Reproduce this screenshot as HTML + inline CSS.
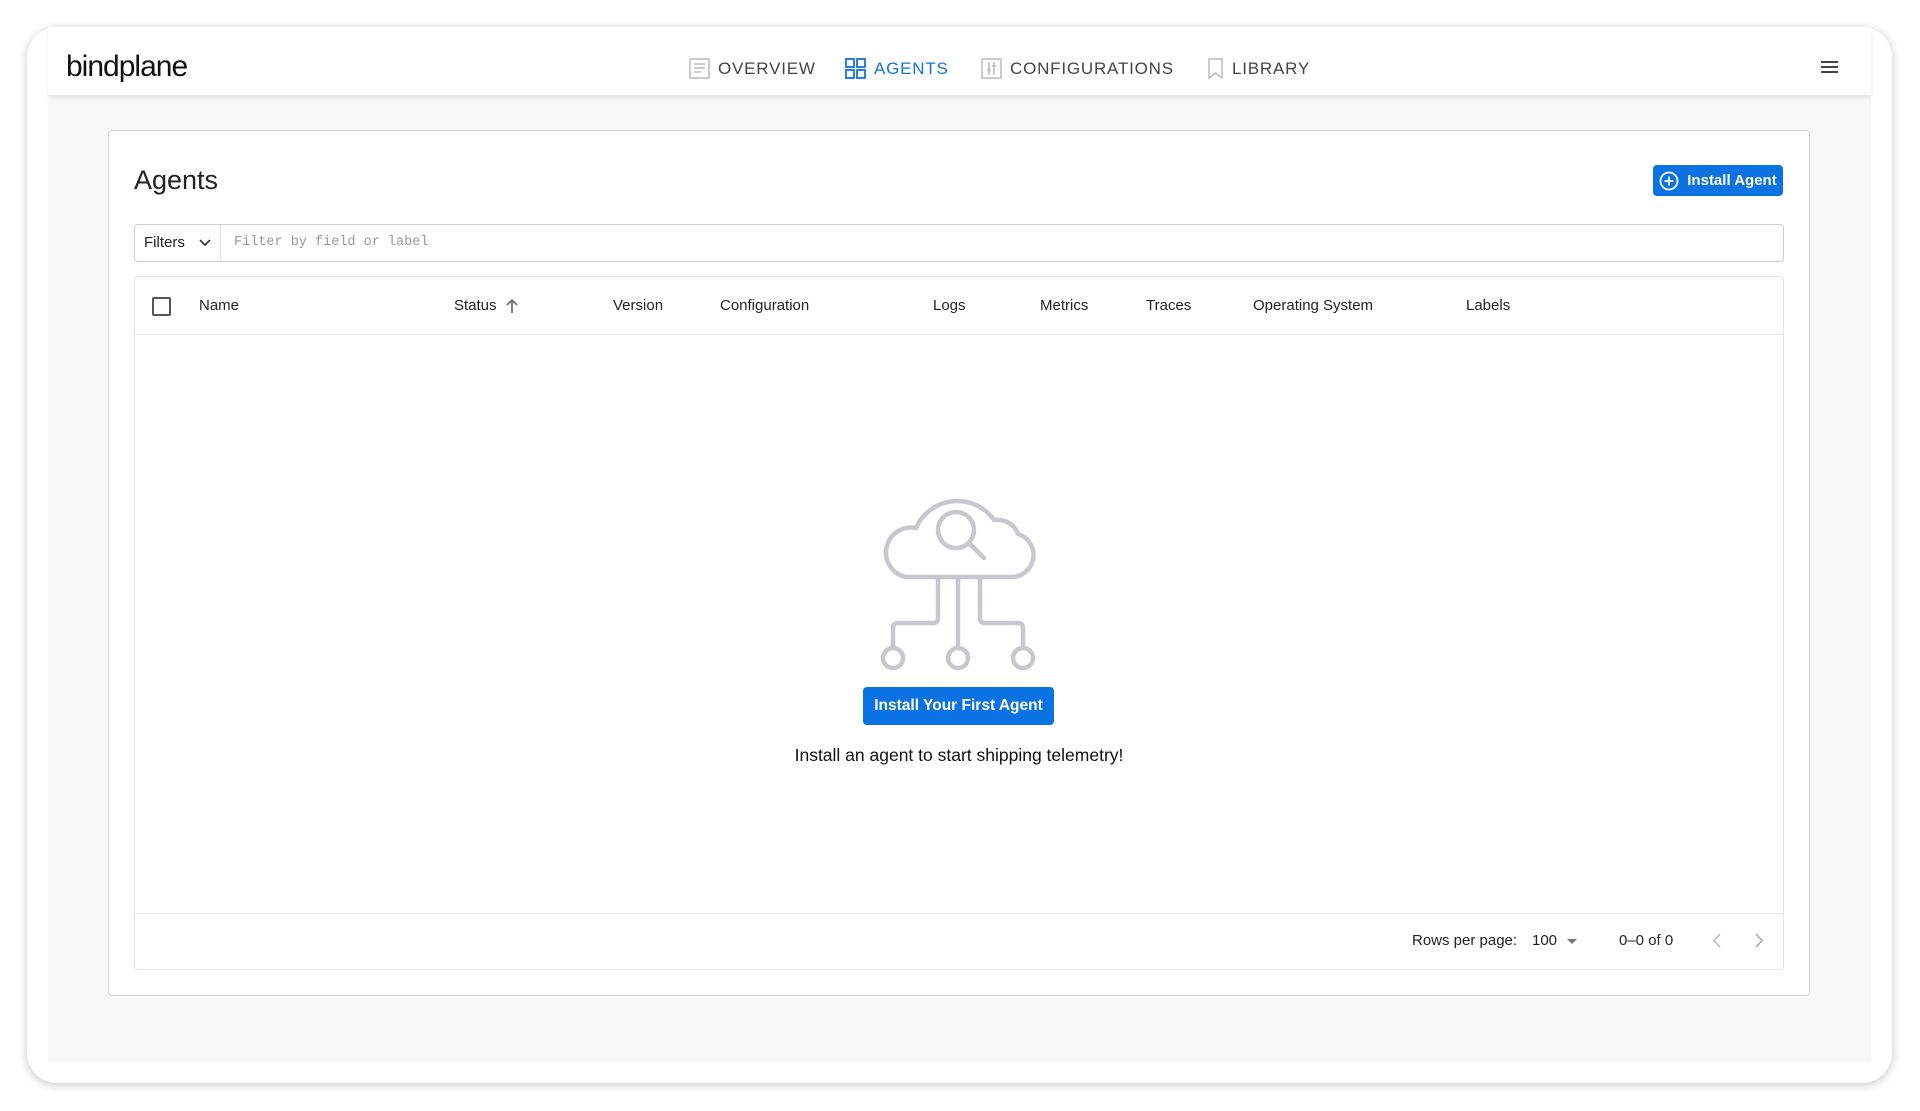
<!DOCTYPE html>
<html><head><meta charset="utf-8"><style>
*{box-sizing:border-box;margin:0;padding:0}
body{width:1920px;height:1111px;background:#fff;font-family:"Liberation Sans",sans-serif;position:relative;overflow:hidden;color:#222}
.card{position:absolute;left:27px;top:27px;width:1865px;height:1056px;background:#fff;border-radius:30px;box-shadow:0 2px 10px rgba(0,0,0,.22)}
.hdr{position:absolute;left:48px;top:27px;width:1823px;height:68px;background:#fff;box-shadow:0 3px 4px rgba(0,0,0,.08);z-index:2}
.bg{position:absolute;left:48px;top:95px;width:1823px;height:967px;background:#f8f8f8}
.logo{position:absolute;left:66px;top:50px;font-size:30px;letter-spacing:-1px;color:#111}
.nav{position:absolute;top:58px;font-size:17px;letter-spacing:.8px;color:#444;display:flex;align-items:center}
.nav svg{margin-right:8px}
.panel{position:absolute;left:108px;top:130px;width:1702px;height:866px;background:#fff;border:1px solid #d6d6d9;border-radius:4px}
.abs{position:absolute}
.btn{background:#0a72e3;color:#fff;border-radius:4px;font-weight:600;display:flex;align-items:center;justify-content:center}
.col{position:absolute;top:297px;font-size:15px;color:#222}
</style></head><body>
<div class="card"></div>
<div class="bg"></div>
<div class="hdr"></div>
<div class="logo" style="z-index:3">bindplane</div>
<div class="nav" style="left:689px;z-index:3"><svg width="21" height="21" viewBox="0 0 21 21" fill="none" stroke="#bbb" stroke-width="1.5"><rect x="1" y="1" width="19" height="19"/><path d="M5 6h11M5 10h11M5 14h7"/></svg>OVERVIEW</div>
<div class="nav" style="left:845px;z-index:3;color:#1373d6"><svg width="21" height="21" viewBox="0 0 21 21" fill="none" stroke="#1373d6" stroke-width="1.8"><rect x="1" y="1" width="8" height="8"/><rect x="12" y="1" width="8" height="8"/><rect x="1" y="12" width="8" height="8"/><rect x="12" y="12" width="8" height="8"/></svg>AGENTS</div>
<div class="nav" style="left:981px;z-index:3"><svg width="21" height="21" viewBox="0 0 21 21" fill="none" stroke="#bbb" stroke-width="1.5"><rect x="1" y="1" width="19" height="19"/><path d="M8 4v13M13 4v13M6 12h4M11 8h4"/></svg>CONFIGURATIONS</div>
<div class="nav" style="left:1207px;z-index:3"><svg width="17" height="21" viewBox="0 0 17 21" fill="none" stroke="#bbb" stroke-width="1.5"><path d="M2 1h13v19l-6.5-5L2 20z"/></svg>LIBRARY</div>
<svg class="abs" style="left:1821px;top:60px;z-index:3" width="17" height="14" viewBox="0 0 17 14" stroke="#444" stroke-width="2"><path d="M0 2h17M0 7h17M0 12h17"/></svg>

<div class="panel"></div>
<div class="abs" style="left:134px;top:165px;font-size:27px;color:#222">Agents</div>
<div class="abs btn" style="left:1653px;top:165px;width:130px;height:31px;font-size:15px"><svg width="20" height="20" viewBox="0 0 20 20" fill="none" stroke="#fff" stroke-width="1.8" style="margin-right:8px"><circle cx="10" cy="10" r="8.5"/><path d="M10 5.5v9M5.5 10h9"/></svg>Install Agent</div>

<div class="abs" style="left:134px;top:224px;width:1650px;height:38px;border:1px solid #cfcfd3;border-radius:4px"></div>
<div class="abs" style="left:220px;top:225px;width:1px;height:36px;background:#ddd"></div>
<div class="abs" style="left:144px;top:234px;font-size:15px">Filters</div>
<svg class="abs" style="left:199px;top:239px" width="12" height="8" viewBox="0 0 12 8" fill="none" stroke="#333" stroke-width="1.6"><path d="M1 1l5 5 5-5"/></svg>
<div class="abs" style="left:234px;top:235px;font-size:13.5px;font-family:'Liberation Mono',monospace;color:#999">Filter by field or label</div>

<div class="abs" style="left:134px;top:276px;width:1650px;height:694px;border:1px solid #e3e3e6;border-radius:4px"></div>
<div class="abs" style="left:135px;top:334px;width:1648px;height:1px;background:#e3e3e6"></div>
<div class="abs" style="left:135px;top:913px;width:1648px;height:1px;background:#e3e3e6"></div>
<div class="abs" style="left:152px;top:297px;width:19px;height:19px;border:2px solid #555;border-radius:2px"></div>
<div class="col" style="left:199px">Name</div>
<div class="col" style="left:454px">Status</div>
<svg class="abs" style="left:506px;top:298px" width="12" height="16" viewBox="0 0 12 16" fill="none" stroke="#666" stroke-width="1.6"><path d="M6 15V2M1 7l5-5 5 5"/></svg>
<div class="col" style="left:613px">Version</div>
<div class="col" style="left:720px">Configuration</div>
<div class="col" style="left:933px">Logs</div>
<div class="col" style="left:1040px">Metrics</div>
<div class="col" style="left:1146px">Traces</div>
<div class="col" style="left:1253px">Operating System</div>
<div class="col" style="left:1466px">Labels</div>

<svg class="abs" style="left:870px;top:470px" width="180" height="210" viewBox="0 0 180 210" fill="none" stroke="#c6c8cd" stroke-width="4.5" stroke-linecap="round" stroke-linejoin="round">
<path d="M36 107H142A22 22 0 0 0 148 64A22 22 0 0 0 124 50A45 45 0 0 0 46 58A25 25 0 0 0 36 107Z"/>
<circle cx="86" cy="60" r="18"/><path d="M99 73L114 88"/>
<path d="M88 107V178"/><circle cx="88" cy="188" r="10"/>
<path d="M68 107V148Q68 153 63 153H28Q23 153 23 158V178"/><circle cx="23" cy="188" r="10"/>
<path d="M110 107V148Q110 153 115 153H148Q153 153 153 158V178"/><circle cx="153" cy="188" r="10"/>
</svg>
<div class="abs btn" style="left:863px;top:687px;width:191px;height:38px;font-size:15.5px">Install Your First Agent</div>
<div class="abs" style="left:759px;top:745px;width:400px;text-align:center;font-size:17.5px;color:#111">Install an agent to start shipping telemetry!</div>

<div class="abs" style="left:1412px;top:932px;font-size:15px">Rows per page:</div>
<div class="abs" style="left:1532px;top:932px;font-size:15px">100</div>
<svg class="abs" style="left:1567px;top:939px" width="10" height="5" viewBox="0 0 10 5"><path d="M0 0h10L5 5z" fill="#777"/></svg>
<div class="abs" style="left:1619px;top:932px;font-size:15px">0–0 of 0</div>
<svg class="abs" style="left:1712px;top:933px" width="10" height="15" viewBox="0 0 10 15" fill="none" stroke="#bbb" stroke-width="1.6"><path d="M8 1L2 7.5 8 14"/></svg>
<svg class="abs" style="left:1754px;top:933px" width="10" height="15" viewBox="0 0 10 15" fill="none" stroke="#aaa" stroke-width="1.6"><path d="M2 1l6 6.5L2 14"/></svg>
</body></html>
